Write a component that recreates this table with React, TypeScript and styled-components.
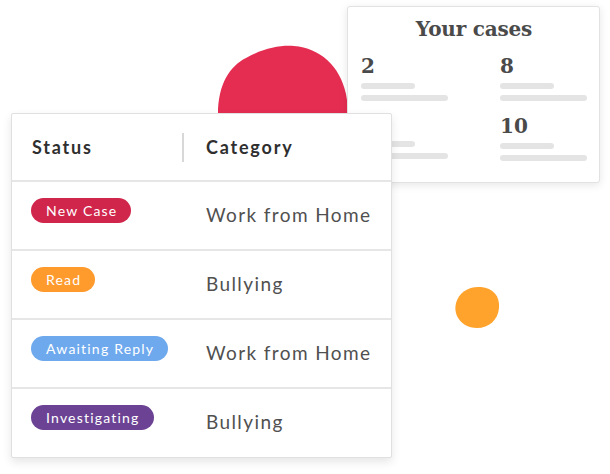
import React from "react";
import styled, { createGlobalStyle } from "styled-components";

const Global = createGlobalStyle`
  html, body { margin: 0; padding: 0; background: #ffffff; }
  body { font-family: "Lato", "Noto Sans", sans-serif; }
  * { box-sizing: border-box; }
`;

const Canvas = styled.div`
  position: relative;
  width: 610px;
  height: 474px;
  overflow: hidden;
  background: #ffffff;
`;

const Blob = styled.svg<{ $left: number; $top: number }>`
  position: absolute;
  left: ${(p) => p.$left}px;
  top: ${(p) => p.$top}px;
  overflow: visible;
`;

const CasesCard = styled.div`
  position: absolute;
  left: 347px;
  top: 6px;
  width: 253px;
  height: 177px;
  background: #ffffff;
  border: 1px solid #e2e2e2;
  border-radius: 3px;
  box-shadow: 0 2px 8px rgba(0, 0, 0, 0.1);
  padding: 8px 12px 0 13px;
  display: flex;
  flex-direction: column;
`;

const CasesTitle = styled.h2`
  margin: 0;
  font-family: "DejaVu Serif", "Liberation Serif", serif;
  font-weight: 700;
  font-size: 20px;
  line-height: 28px;
  color: #4a4a4a;
  text-align: center;
  letter-spacing: -0.2px;
`;

const StatGrid = styled.div`
  display: grid;
  grid-template-columns: 139px 1fr;
  margin-top: 2px;
`;

const Stat = styled.div`
  display: flex;
  flex-direction: column;
  height: 60px;
`;

const StatNumber = styled.div`
  font-family: "DejaVu Serif", "Liberation Serif", serif;
  font-weight: 700;
  font-size: 20px;
  line-height: 42px;
  color: #4a4a4a;
  height: 38px;
  overflow: visible;
`;

const Bar = styled.div<{ $w: number }>`
  width: ${(p) => p.$w}px;
  height: 6px;
  border-radius: 3px;
  background: #e4e4e4;
  margin-bottom: 6px;
  flex-shrink: 0;
`;

const TableCard = styled.div`
  position: absolute;
  left: 11px;
  top: 113px;
  width: 381px;
  height: 345px;
  background: #ffffff;
  border: 1px solid #e0e0e0;
  border-radius: 2px;
  box-shadow: 0 4px 10px rgba(0, 0, 0, 0.1);
  display: flex;
  flex-direction: column;
`;

const HeaderRow = styled.div`
  display: grid;
  grid-template-columns: 170px 1fr;
  height: 68px;
  align-items: center;
  border-bottom: 2px solid #e6e6e6;
`;

const HeaderCell = styled.div<{ $divider?: boolean }>`
  font-family: "Lato", sans-serif;
  font-weight: 700;
  font-size: 18px;
  letter-spacing: 1.8px;
  color: #2f2f2f;
  padding-left: ${(p) => (p.$divider ? "22px" : "20px")};
  border-left: ${(p) => (p.$divider ? "2px solid #d8d8d8" : "none")};
  line-height: 29px;
`;

const Row = styled.div<{ $last?: boolean }>`
  display: grid;
  grid-template-columns: 170px 1fr;
  height: ${(p) => (p.$last ? "67px" : "69px")};
  align-items: start;
  border-bottom: ${(p) => (p.$last ? "none" : "2px solid #e6e6e6")};
`;

const BadgeCell = styled.div`
  padding: 16px 0 0 19px;
`;

const Badge = styled.span<{ $bg: string }>`
  display: inline-flex;
  align-items: center;
  height: 25px;
  padding: 0 14px 0 15px;
  border-radius: 13px;
  background: ${(p) => p.$bg};
  color: #ffffff;
  font-family: "Lato", sans-serif;
  font-size: 14px;
  letter-spacing: 1.2px;
  white-space: nowrap;
`;

const CategoryCell = styled.div`
  padding: 22px 0 0 24px;
  font-family: "Lato", sans-serif;
  font-size: 19px;
  line-height: 22px;
  letter-spacing: 1.4px;
  color: #505050;
  white-space: nowrap;
`;

const rows = [
  { status: "New Case", color: "#d1264b", category: "Work from Home" },
  { status: "Read", color: "#ff9a2d", category: "Bullying" },
  { status: "Awaiting Reply", color: "#6ea9ee", category: "Work from Home" },
  { status: "Investigating", color: "#6c4394", category: "Bullying" },
];

const stats = ["2", "8", "", "10"];

export default function App() {
  return (
    <Canvas>
      <Global />
      <Blob $left={216} $top={44} width="134" height="140" viewBox="0 0 134 140">
        <path
          d="M2 70 C2 40 14 22 30 14 C48 4 64 1 78 2 C104 4 124 22 130 50 C134 70 133 100 124 120 C110 138 40 140 12 118 C3 104 2 86 2 70 Z"
          fill="#e52d52"
        />
      </Blob>
      <Blob $left={453} $top={285} width="48" height="45" viewBox="0 0 48 45">
        <path
          d="M3 18 C6 7 16 1 28 2 C40 3 47 11 46 23 C45 35 36 43 24 43 C15 43 8 39 4 31 C2 27 2 22 3 18 Z"
          fill="#ffa32c"
        />
      </Blob>
      <CasesCard>
        <CasesTitle>Your cases</CasesTitle>
        <StatGrid>
          {stats.map((n, i) => (
            <Stat key={i}>
              <StatNumber>{n}</StatNumber>
              <Bar $w={54} />
              <Bar $w={87} />
            </Stat>
          ))}
        </StatGrid>
      </CasesCard>
      <TableCard>
        <HeaderRow>
          <HeaderCell>Status</HeaderCell>
          <HeaderCell $divider>Category</HeaderCell>
        </HeaderRow>
        {rows.map((r, i) => (
          <Row key={r.status} $last={i === rows.length - 1}>
            <BadgeCell>
              <Badge $bg={r.color}>{r.status}</Badge>
            </BadgeCell>
            <CategoryCell>{r.category}</CategoryCell>
          </Row>
        ))}
      </TableCard>
    </Canvas>
  );
}
